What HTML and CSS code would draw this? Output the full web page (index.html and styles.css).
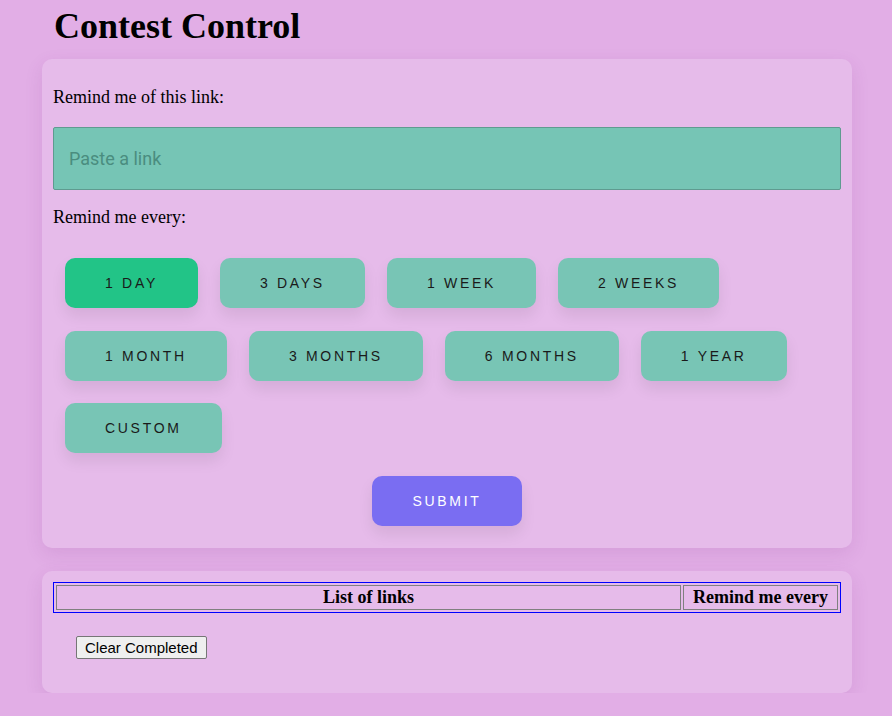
FILE: index.html
```html
<!DOCTYPE html>
<html>
<head>
<meta charset="utf-8">
<title>Contest Control</title>
<link rel="stylesheet" href="styles.css">
</head>
<body>
<main class="page">
  <h1 class="title">Contest Control</h1>
  <section class="card form-card">
    <p class="label first">Remind me of this link:</p>
    <input class="link-input" type="text" placeholder="Paste a link">
    <p class="label">Remind me every:</p>
    <div class="options">
      <button class="opt active">1 Day</button>
      <button class="opt">3 Days</button>
      <button class="opt">1 Week</button>
      <button class="opt">2 Weeks</button>
      <button class="opt">1 Month</button>
      <button class="opt">3 Months</button>
      <button class="opt">6 Months</button>
      <button class="opt">1 Year</button>
      <button class="opt">Custom</button>
    </div>
    <div class="submit-row">
      <button class="submit">Submit</button>
    </div>
  </section>
  <section class="card list-card">
    <table class="links">
      <thead>
        <tr><th class="col-link">List of links</th><th class="col-every">Remind me every</th></tr>
      </thead>
    </table>
    <button class="clear">Clear Completed</button>
  </section>
</main>
</body>
</html>
```
FILE: styles.css
```css
html, body {
  margin: 0;
  padding: 0;
}
body {
  background: #e2aee6;
  font-family: "Liberation Serif", "Times New Roman", serif;
  font-size: 18px;
  color: #000;
}
.page {
  padding: 0 40px 0 42px;
}
.title {
  margin: 0;
  padding: 6px 0 0 12px;
  font-size: 36px;
  line-height: 41px;
  font-weight: bold;
}
.card {
  background: #e6bbea;
  border-radius: 10px;
  box-shadow: 0 6px 18px rgba(120, 40, 130, 0.12);
}
.form-card {
  margin-top: 12px;
  padding: 28px 11px 22px 11px;
}
.label {
  margin: 0;
  font-size: 18px;
  line-height: 21px;
}
.label.first {
  margin-bottom: 19px;
}
.link-input {
  display: block;
  box-sizing: border-box;
  width: 100%;
  height: 63px;
  margin: 0 0 17px 0;
  padding: 0 15px;
  background: #76c5b5;
  border: 1px solid #5f9b90;
  border-radius: 2px;
  font-family: Roboto, "Noto Sans", sans-serif;
  font-size: 18px;
  color: #1b3d36;
  outline: none;
}
.link-input::placeholder {
  color: #4a8d7f;
}
.options {
  display: flex;
  flex-wrap: wrap;
  gap: 22.5px 22px;
  padding: 30px 0 0 12px;
}
.opt, .submit {
  height: 50px;
  padding: 0 40px;
  border: none;
  border-radius: 10px;
  background: #78c5b5;
  color: #1a1a1a;
  font-family: "Liberation Sans", Arial, sans-serif;
  font-size: 14px;
  letter-spacing: 2.7px;
  text-transform: uppercase;
  box-shadow: 0 8px 15px rgba(0, 0, 0, 0.08);
  cursor: pointer;
}
.opt.active {
  background: #22c487;
}
.submit-row {
  display: flex;
  justify-content: center;
  padding-top: 23px;
}
.submit {
  background: #7a6df2;
  color: #fff;
}
.list-card {
  margin-top: 23px;
  padding: 11px 11px 34px 11px;
}
.links {
  width: 100%;
  border: 1px solid #0000ff;
  border-spacing: 2px;
}
.links th {
  border: 1px solid #808080;
  padding: 1px;
  font-size: 18px;
  line-height: 21px;
  font-weight: bold;
}
.col-link {
  width: 100%;
}
.links .col-every {
  white-space: nowrap;
  padding: 1px 9px;
}
.clear {
  display: block;
  box-sizing: border-box;
  margin: 23px 0 0 23px;
  height: 23px;
  padding: 0 8px;
  font-family: "Liberation Sans", Arial, sans-serif;
  font-size: 15px;
  background: #efefef;
  border: 1px solid #767676;
  border-radius: 2px;
  color: #000;
}
```
